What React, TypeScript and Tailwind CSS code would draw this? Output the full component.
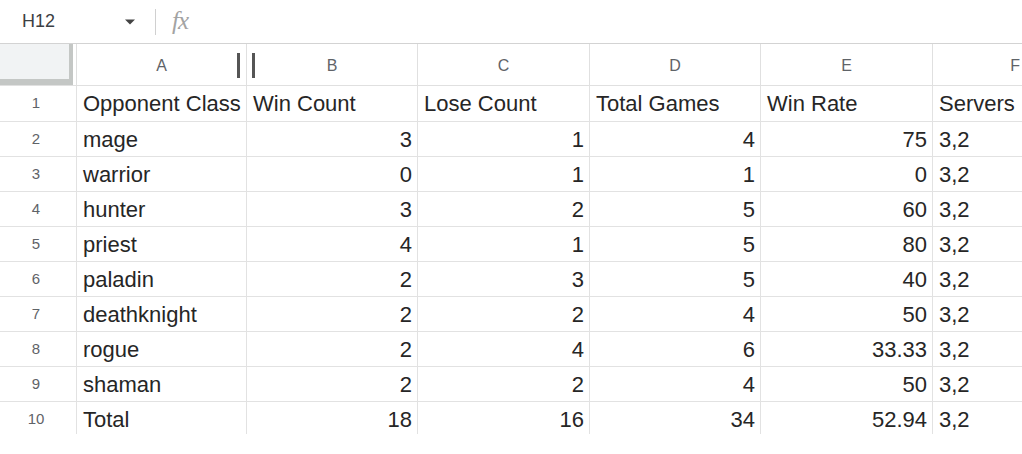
import React from "react";

const rows: [string, string, string, string, string, string][] = [
  ["Opponent Class", "Win Count", "Lose Count", "Total Games", "Win Rate", "Servers"],
  ["mage", "3", "1", "4", "75", "3,2"],
  ["warrior", "0", "1", "1", "0", "3,2"],
  ["hunter", "3", "2", "5", "60", "3,2"],
  ["priest", "4", "1", "5", "80", "3,2"],
  ["paladin", "2", "3", "5", "40", "3,2"],
  ["deathknight", "2", "2", "4", "50", "3,2"],
  ["rogue", "2", "4", "6", "33.33", "3,2"],
  ["shaman", "2", "2", "4", "50", "3,2"],
  ["Total", "18", "16", "34", "52.94", "3,2"],
];

const cols = ["A", "B", "C", "D", "E", "F"];
const gridCols = "grid grid-cols-[76px_170px_171px_172px_171px_172px_1fr]";

export default function App() {
  return (
    <div
      className="w-[1022px] h-[454px] bg-white overflow-hidden text-[#262626]"
      style={{ fontFamily: '"Liberation Sans", Arial, sans-serif' }}
    >
      {/* formula bar */}
      <div className="h-[44px] flex items-center border-b border-[#d3d3d3]">
        <div className="w-[120px] pl-[22px] text-[18px] text-[#3c4043]">H12</div>
        <svg width="12" height="8" viewBox="0 0 12 8" className="ml-[4px]">
          <path d="M1 1.5 L11 1.5 L6 6.5 Z" fill="#444" />
        </svg>
        <div className="ml-[19px] w-px h-[26px] bg-[#d0d0d0]" />
        <div
          className="ml-[16px] text-[25px] italic text-[#a3a3a3] tracking-[-1px] leading-none pb-[2px]"
          style={{ fontFamily: '"Liberation Serif", "Times New Roman", serif' }}
        >
          fx
        </div>
      </div>

      <div className="h-[390px] overflow-hidden">
        {/* column header row */}
        <div className={`${gridCols} h-[42px] border-b border-[#e0e0e0]`}>
          <div className="bg-[#f1f3f4] border-r-[4px] border-b-[6px] border-[#c4c7c5] mr-[3px]" />
          {cols.map((c, i) => (
            <div
              key={c}
              className={`relative flex items-center text-[16px] text-[#5f6368] border-l border-[#e0e0e0] ${
                i === 5 ? "justify-end pr-[2px] pt-[2px]" : "justify-center pt-[2px]"
              }`}
            >
              {c}
              {i === 0 && (
                <div className="absolute right-[6px] top-[9px] w-[3px] h-[25px] bg-[#555]" />
              )}
              {i === 1 && (
                <div className="absolute left-[5px] top-[9px] w-[3px] h-[25px] bg-[#555]" />
              )}
            </div>
          ))}
        </div>

        {/* data rows */}
        {rows.map((r, ri) => (
          <div
            key={ri}
            className={`${gridCols} ${ri === 0 ? "h-[36px]" : "h-[35px]"} border-b border-[#e2e2e2]`}
          >
            <div className="flex items-center justify-center text-[15px] text-[#5f6368] pr-[4px]">
              {ri + 1}
            </div>
            {r.map((v, ci) => {
              const right = ri > 0 && ci >= 1 && ci <= 4;
              return (
                <div
                  key={ci}
                  className={`flex items-center text-[22px] whitespace-nowrap border-l border-[#e2e2e2] ${
                    right ? "justify-end pr-[5px]" : "pl-[6px]"
                  }`}
                >
                  {v}
                </div>
              );
            })}
          </div>
        ))}
      </div>
    </div>
  );
}
